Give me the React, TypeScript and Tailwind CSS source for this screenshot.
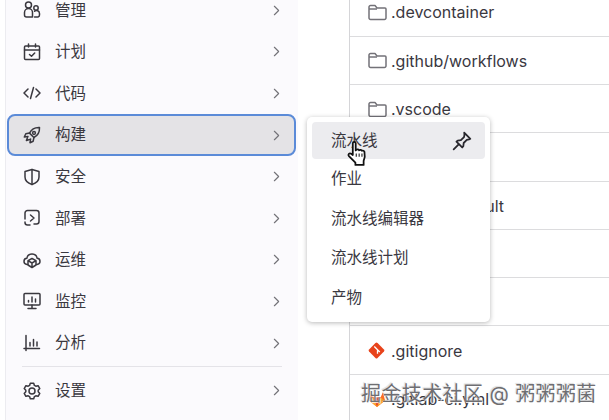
import type { ReactNode } from "react";
import { ChevronRight } from "lucide-react";

const cjk = "font-['Inter','Noto_Sans_CJK_SC',sans-serif]";

function Icon({ children }: { children: ReactNode }) {
  return (
    <svg width="18" height="18" viewBox="0 0 18 18" fill="none" stroke="#3a383f" strokeWidth="1.5" strokeLinecap="round" strokeLinejoin="round">
      {children}
    </svg>
  );
}

const navItems: { label: string; active?: boolean; icon: ReactNode }[] = [
  {
    label: "管理",
    icon: (
      <Icon>
        <circle cx="5.5" cy="4" r="3" />
        <path d="M1.5 14v-2.500a4 4 0 0 1 8 0V16h-6a2 2 0 0 1-2-2z" />
        <circle cx="13" cy="7" r="2.200" />
        <path d="M11.500 16h3.500a2 2 0 0 0 1.500-2v-1.500a3 3 0 0 0-5-2.200" />
      </Icon>
    ),
  },
  {
    label: "计划",
    icon: (
      <Icon>
        <rect x="1.500" y="3" width="15" height="13.500" rx="1" />
        <path d="M1.500 7h15M5.500 1v3M12.500 1v3M6.500 11.500l2 1.800 3.200-3.300" />
      </Icon>
    ),
  },
  {
    label: "代码",
    icon: (
      <Icon>
        <path d="M5 5 1 9l4 4M13 5l4 4-4 4M10.500 3.500l-3 11" />
      </Icon>
    ),
  },
  {
    label: "构建",
    active: true,
    icon: (
      <Icon>
        <path d="M16.500 1.500c-4.500-.2-8 1.600-10 5.600l4.400 4.400c4-2 5.800-5.500 5.600-10z" />
        <path d="M6.500 7.100 2.800 7.800 1.300 11l3.700-.6M10.900 11.500l-.7 3.700L7 16.700l.6-3.700" />
        <circle cx="11" cy="7" r="1.400" />
        <path d="M4.500 11.500 3.400 14.600 6.500 13.500" />
      </Icon>
    ),
  },
  {
    label: "安全",
    icon: (
      <Icon>
        <path d="M9 1.500 2 3.500V9c0 3.500 2.800 6.200 7 7.500 4.200-1.300 7-4 7-7.500V3.500z" />
        <path d="M9 1.500v15" />
      </Icon>
    ),
  },
  {
    label: "部署",
    icon: (
      <Icon>
        <path d="M2 10V4a2.500 2.500 0 0 1 2.500-2.500h9A2.500 2.500 0 0 1 16 4v8.500a2.500 2.500 0 0 1-2.500 2.500H11" />
        <path d="M2 13v.5A2.500 2.500 0 0 0 4.500 16H7M7.500 6 11 9l-3.500 3" />
      </Icon>
    ),
  },
  {
    label: "运维",
    icon: (
      <Icon>
        <path d="M4.500 13.500H4A3.200 3.200 0 0 1 1 10.300a3 3 0 0 1 2.800-3 5.300 5.300 0 0 1 10.400 0 3 3 0 0 1 2.800 3 3.200 3.200 0 0 1-3 3.200h-.5" />
        <path d="M9 7.500l4 2.200v4.300l-4 2.500-4-2.500V9.700zM5 9.700l4 2.300 4-2.300M9 12v4.500" />
      </Icon>
    ),
  },
  {
    label: "监控",
    icon: (
      <Icon>
        <rect x="1" y="1.500" width="16" height="11.500" rx="1" />
        <path d="M5 16.500h8M9 13v3.500M5.500 10V8.500M9 10V5M12.500 10V7" />
      </Icon>
    ),
  },
  {
    label: "分析",
    icon: (
      <Icon>
        <path d="M3 1.500v15M1 14.500h15.500M7 12V8.500M10.500 12V5.500M14 12V8" />
      </Icon>
    ),
  },
];

function GearIcon() {
  return (
    <svg width="18" height="18" viewBox="0 0 18 18" fill="none" stroke="#3a383f" strokeWidth="1.5" strokeLinejoin="round">
      <path d="M7.300 1.200h3.400l.7 2.200 1.400.8 2.300-.5 1.700 2.900-1.600 1.700v1.400l1.600 1.700-1.700 2.900-2.300-.5-1.400.8-.7 2.200H7.300l-.7-2.200-1.400-.8-2.300.5-1.700-2.900 1.600-1.700V8.300L1.200 6.600l1.700-2.900 2.300.5 1.400-.8z" />
      <circle cx="9" cy="9" r="3" />
    </svg>
  );
}

function NavRow({ label, active, icon }: { label: string; active?: boolean; icon: ReactNode }) {
  return (
    <div
      className={
        active
          ? "ml-[1px] mr-[2px] flex h-[41.6px] items-center rounded-lg border-2 border-[#5b8bd8] bg-[#e4e3e6] pl-[14px] pr-[9.5px]"
          : "ml-[1px] mr-[2px] flex h-[41.6px] items-center pl-[16px] pr-[11.5px]"
      }
    >
      <span className="flex w-[32px] shrink-0">{icon}</span>
      <span className="flex-1 text-[15.5px] text-[#3a383f]">{label}</span>
      <ChevronRight size={17} strokeWidth={1.6} className="text-[#737278]" />
    </div>
  );
}

function FolderIcon() {
  return (
    <svg width="19" height="17" viewBox="0 0 19 17" fill="none" stroke="#737278" strokeWidth="1.5" strokeLinejoin="round">
      <path d="M1 3a1.500 1.500 0 0 1 1.500-1.500h4.500L9 4h8a1 1 0 0 1 1 1v9a1.500 1.500 0 0 1-1.500 1.500h-14A1.500 1.500 0 0 1 1 14z" />
      <path d="M1 5h8" />
    </svg>
  );
}

function GitIcon() {
  return (
    <svg width="17" height="17" viewBox="0 0 17 17">
      <rect x="2.500" y="2.500" width="12" height="12" rx="1.500" transform="rotate(45 8.500 8.500)" fill="#e8431b" />
      <path d="M6.300 4.500 9.500 7.700M9.500 7.700v4M9.500 7.700l2.300 2.300" stroke="#fff" strokeWidth="1.300" fill="none" />
    </svg>
  );
}

function GitlabIcon() {
  return (
    <svg width="18" height="18" viewBox="0 0 18 18">
      <path d="M9 17 1 10.500 3 2l2.500 5.500h7L15 2l2 8.500z" fill="#fc6d26" />
      <path d="M9 17 5.500 7.500h7z" fill="#e24329" />
      <path d="M9 17 1 10.500l4.500-3zM9 17l8-6.500-4.500-3z" fill="#fca326" />
    </svg>
  );
}

function FileRow({ name, icon }: { name: string; icon?: ReactNode }) {
  return (
    <div className="flex h-[48.3px] shrink-0 items-center border-b border-[#dcdcde] pl-[18px] pt-[1px]">
      <span className="flex w-[23px] shrink-0">{icon}</span>
      <span className="text-[16px] text-[#3a383f]">{name}</span>
    </div>
  );
}

function PinIcon() {
  return (
    <svg width="20" height="20" viewBox="0 0 18 18" fill="none" stroke="#28272d" strokeWidth="1.600" strokeLinejoin="round" strokeLinecap="round">
      <path d="M11 1.500 16.500 7l-1.200.6-2 .4-2.800 2.800-.3 2.900-1 1.100L4 9.600l1.100-1 2.900-.3L10.800 5.500l.4-2z" />
      <path d="M6 12 1.500 16.500" />
    </svg>
  );
}

function HandCursor() {
  return (
    <svg width="24" height="25" viewBox="0 0 22 24" fill="#fff" stroke="#111" strokeWidth="1.700" strokeLinejoin="round">
      <path d="M6 2.200c0-1.700 2.800-1.700 2.800 0V9l.6-.5c.9-.8 2.300-.5 2.700.4.800-.7 2.200-.5 2.600.5 1-.5 2.300 0 2.500 1.200.6 3 .3 6-.8 8.400V23H8.500v-2.200L2.300 14.500c-1.400-1.600.5-3.500 2.200-2.200L6 13.500z" />
      <path d="M9.300 12v3M12.100 12v3M14.800 12v3" strokeWidth="1" />
    </svg>
  );
}

export default function App() {
  return (
    <div className={`relative flex h-[420px] w-[609px] overflow-hidden bg-white ${cjk}`}>
      {/* sidebar */}
      <aside className="ml-[5px] w-[293px] shrink-0 border-l border-[#ececf0] bg-[#fbfafd]">
        <div className="-mt-[10.5px]">
          {navItems.map((item) => (
            <NavRow key={item.label} {...item} />
          ))}
        </div>
        <div className="mx-[16px] mt-[2px] h-px bg-[#e4e3e8]" />
        <div className="mt-[3px]">
          <NavRow label="设置" icon={<GearIcon />} />
        </div>
      </aside>

      {/* file list */}
      <main className="ml-[51px] flex-1 border-l border-[#d5d5d8]">
        <div className="-mt-[11.7px] flex flex-col">
          <FileRow name=".devcontainer" icon={<FolderIcon />} />
          <FileRow name=".github/workflows" icon={<FolderIcon />} />
          <FileRow name=".vscode" icon={<FolderIcon />} />
          <FileRow name="" />
          <FileRow name=".gitlabs/default" />
          <FileRow name="" />
          <FileRow name="" />
          <FileRow name=".gitignore" icon={<GitIcon />} />
          <FileRow name=".gitlab-ci.yml" icon={<GitlabIcon />} />
        </div>
      </main>

      {/* flyout */}
      <div className="absolute left-[307px] top-[117px] w-[183px] rounded-[5px] bg-white p-[5px] text-[15.5px] text-[#3a383f] shadow-[0_1px_5px_rgba(0,0,0,0.28)]">
        <div className="flex h-[37px] items-center justify-between rounded bg-[#ececef] pl-[19px] pr-[13px]">
          <span>流水线</span>
          <PinIcon />
        </div>
        {["作业", "流水线编辑器", "流水线计划", "产物"].map((label) => (
          <div key={label} className="flex h-[39.5px] items-center pl-[19px]">
            {label}
          </div>
        ))}
      </div>

      {/* mouse pointer */}
      <div className="absolute left-[346px] top-[141px]">
        <HandCursor />
      </div>

      {/* watermark */}
      <div className="absolute left-[361px] top-[379px] whitespace-nowrap text-[20px] tracking-[0.4px] text-[#6e6e72] [text-shadow:0_0_1px_#fff,1px_1px_1px_rgba(255,255,255,0.9),-1px_-1px_1px_rgba(0,0,0,0.15)]">
        掘金技术社区 @ 粥粥粥菌
      </div>
    </div>
  );
}
